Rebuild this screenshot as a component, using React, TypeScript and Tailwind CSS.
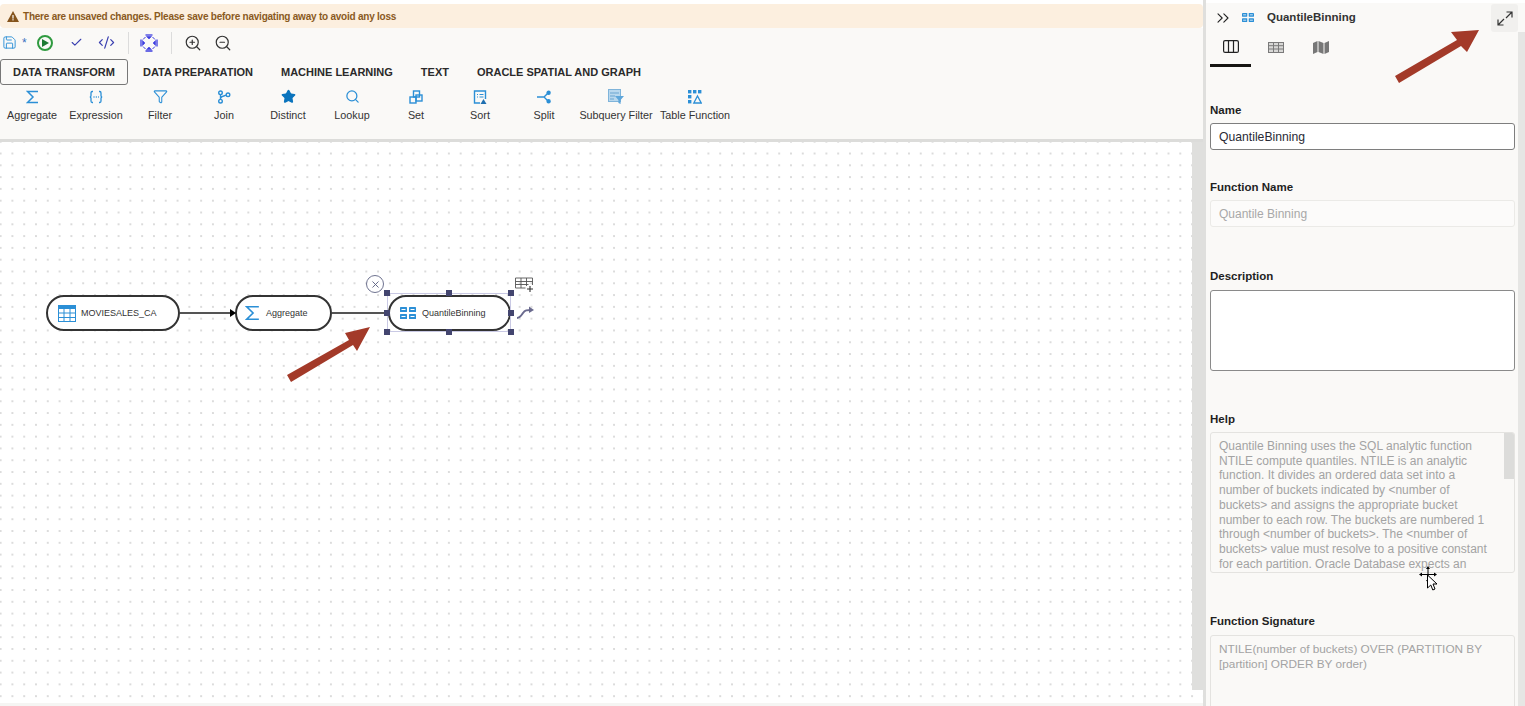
import React from "react";
import { Filter, Star, Search, ZoomIn, ZoomOut, Check, CodeXml, Save, ChevronsRight, X } from "lucide-react";

const blue = "#2b8fd6";

const SigmaIcon = ({ w = 13, h = 14, sw = 1.5 }: { w?: number; h?: number; sw?: number }) => (
  <svg width={w} height={h} viewBox="0 0 13 14" fill="none" stroke={blue} strokeWidth={sw} preserveAspectRatio="none">
    <path d="M12 1.500H1.500L7 7l-5.500 5.500H12" />
  </svg>
);

const Cell4 = ({ s = 14 }: { s?: number }) => (
  <svg width={s} height={s * 0.75} viewBox="0 0 16 12" fill={blue}>
    <rect x="0" y="0" width="7" height="5" rx="0.6" />
    <rect x="9" y="0" width="7" height="5" rx="0.6" />
    <rect x="0" y="7" width="7" height="5" rx="0.6" />
    <rect x="9" y="7" width="7" height="5" rx="0.6" />
    <rect x="1.5" y="2" width="4" height="1" fill="#fff" />
    <rect x="10.5" y="2" width="4" height="1" fill="#fff" />
    <rect x="1.5" y="9" width="4" height="1" fill="#fff" />
    <rect x="10.5" y="9" width="4" height="1" fill="#fff" />
  </svg>
);

const ExprIcon = () => (
  <svg width="14" height="14" viewBox="0 0 14 14" fill="none" stroke={blue} strokeWidth="1.3">
    <path d="M4 1.500H3.200C2.300 1.500 2 2 2 3v2.500C2 6.500 1.500 7 .8 7c.7 0 1.200.5 1.200 1.500V11c0 1 .3 1.500 1.200 1.500H4" />
    <path d="M10 1.500h.8c.9 0 1.200.5 1.200 1.500v2.500c0 1 .5 1.500 1.200 1.500-.7 0-1.200.5-1.200 1.500V11c0 1-.3 1.500-1.200 1.500H10" />
    <path d="M4.500 7h1M6.800 7h1M9 7h.8" />
  </svg>
);
const JoinIcon = () => (
  <svg width="14" height="14" viewBox="0 0 14 14" fill="none" stroke={blue} strokeWidth="1.4">
    <circle cx="3.5" cy="2.8" r="1.8" />
    <circle cx="3.5" cy="11.2" r="1.8" />
    <circle cx="11" cy="4.8" r="1.8" />
    <path d="M3.500 4.600v4.800M9.200 5.200C7.500 6 5 6 3.500 8" />
  </svg>
);
const SetIcon = () => (
  <svg width="14" height="14" viewBox="0 0 14 14" fill="none" stroke={blue} strokeWidth="1.4">
    <rect x="4.5" y="1" width="6" height="6" />
    <rect x="1" y="7" width="6" height="6" />
    <rect x="7" y="5" width="6" height="6" />
  </svg>
);
const SortIcon = () => (
  <svg width="14" height="14" viewBox="0 0 14 14" fill="none">
    <path d="M7 13H1.500V1h11v8" stroke={blue} strokeWidth="1.4" />
    <path d="M4 4.500h1M6.500 4.500h4M4 7h1M6.500 7h4" stroke={blue} strokeWidth="1" />
    <path d="M10.500 9l3 5h-6z" fill="#1f6fb0" />
  </svg>
);
const SplitIcon = () => (
  <svg width="14" height="14" viewBox="0 0 14 14" fill="none" stroke={blue} strokeWidth="1.4">
    <path d="M0 7h7l3.500-3.500M7 7l3.500 3.500" />
    <circle cx="11.6" cy="2.8" r="1.5" fill={blue} />
    <circle cx="11.6" cy="11.2" r="1.5" fill={blue} />
  </svg>
);
const SubqueryIcon = () => (
  <svg width="16" height="15" viewBox="0 0 16 15" fill="none">
    <rect x="0.5" y="0.5" width="12" height="12" fill="#b9d8ee" stroke="#7fb4da" />
    <path d="M2 4h9M2 7h5M2 10h4" stroke="#6aa5d0" />
    <path d="M7 7h9l-3.400 4v4l-2.200-1v-3z" fill="#5ea6da" />
  </svg>
);
const TableFnIcon = () => (
  <svg width="14" height="14" viewBox="0 0 14 14" fill={blue}>
    <rect x="0" y="0" width="3.4" height="3.4" />
    <rect x="5" y="0" width="3.4" height="3.4" />
    <rect x="10" y="0" width="3.4" height="3.4" />
    <rect x="0" y="5" width="3.4" height="3.4" />
    <rect x="0" y="10" width="3.4" height="3.4" />
    <path d="M9.500 6l3.700 7H5.800z" fill="none" stroke={blue} strokeWidth="1.3" />
  </svg>
);

const palette = [
  { label: "Aggregate", w: "w-[64px]", icon: <SigmaIcon /> },
  { label: "Expression", w: "w-[64px]", icon: <ExprIcon /> },
  { label: "Filter", w: "w-[64px]", icon: <Filter size={15} color={blue} strokeWidth={1.7} /> },
  { label: "Join", w: "w-[64px]", icon: <JoinIcon /> },
  { label: "Distinct", w: "w-[64px]", icon: <Star size={15} color="#0b74bd" fill="#0b74bd" /> },
  { label: "Lookup", w: "w-[64px]", icon: <Search size={15} color={blue} strokeWidth={2} /> },
  { label: "Set", w: "w-[64px]", icon: <SetIcon /> },
  { label: "Sort", w: "w-[64px]", icon: <SortIcon /> },
  { label: "Split", w: "w-[64px]", icon: <SplitIcon /> },
  { label: "Subquery Filter", w: "w-[80px]", icon: <SubqueryIcon /> },
  { label: "Table Function", w: "w-[78px]", icon: <TableFnIcon /> },
];

const Handle = ({ className }: { className: string }) => (
  <div className={`absolute w-[6px] h-[6px] bg-[#43456f] ${className}`} />
);

const Node = ({ className, icon, label }: { className: string; icon: React.ReactNode; label: string }) => (
  <div className={`absolute h-[36px] rounded-[18px] border-2 border-[#333333] bg-white flex items-center text-[9px] text-[#333] ${className}`}>
    {icon}
    <span className="mt-[1px]">{label}</span>
  </div>
);

const Label = ({ children, className = "" }: { children: React.ReactNode; className?: string }) => (
  <div className={`text-[11.5px] leading-[14px] font-bold text-[#1f1f1f] ${className}`}>{children}</div>
);

export default function App() {
  return (
    <div className="w-[1525px] h-[706px] overflow-hidden flex bg-white font-['Liberation_Sans',sans-serif]">
      <div className="w-[1203px] h-full flex flex-col pt-[4px]">
        <div className="h-[24px] shrink-0 bg-[#fcefdf] rounded-[4px] flex items-center pl-[7px] gap-[4px] text-[10px] tracking-[-0.23px] font-bold text-[#8a5a1e]">
          <svg width="12" height="11" viewBox="0 0 12 11"><path d="M6 0l6 11H0z" fill="#85541c" /><rect x="5.4" y="4" width="1.2" height="3.6" fill="#fff" /><rect x="5.4" y="8.2" width="1.2" height="1.2" fill="#fff" /></svg>
          <span>There are unsaved changes. Please save before navigating away to avoid any loss</span>
        </div>
        <div className="h-[111px] shrink-0 bg-[#faf9f7] flex flex-col">
          <div className="h-[31px] shrink-0 flex items-center pl-[2px] pb-[2px]">
            <Save size={15} color={blue} strokeWidth={1.5} />
            <span className="ml-[5px] w-[7px] text-[12px] text-[#3a70c0] leading-none">*</span>
            <div className="ml-[8px] w-[16px] h-[16px] rounded-full border-2 border-[#2f9a3f] flex items-center justify-center">
              <div className="w-0 h-0 border-y-[4px] border-y-transparent border-l-[7px] border-l-[#1d7a33] ml-[1px]" />
            </div>
            <Check size={13} color="#3a3fb0" strokeWidth={2} className="ml-[17px]" />
            <CodeXml size={17} color="#3a3fb0" strokeWidth={1.7} className="ml-[15px]" />
            <div className="ml-[13px] w-px h-[22px] bg-[#dcdcdc]" />
            <svg className="ml-[11px]" width="18" height="18" viewBox="0 0 18 18" fill="#3d3de0" stroke="#3d3de0" strokeWidth="0.6">
              <path d="M5.500 1h7" fill="none" strokeWidth="1.3" />
              <path d="M6.500 2.500h5L9 5zM6.500 15.500h5L9 13zM2.500 6.500v5L5 9zM15.500 6.500v5L13 9z" />
              <path d="M5.500 17h7M1 5.500v7M17 5.500v7" fill="none" strokeWidth="1.3" />
              <path d="M3 5.500L5.500 3M12.500 3L15 5.500M3 12.500L5.500 15M15 12.500L12.500 15" fill="none" strokeWidth="1" />
            </svg>
            <div className="ml-[13px] w-px h-[22px] bg-[#dcdcdc]" />
            <ZoomIn size={18} color="#333" strokeWidth={1.6} className="ml-[12px]" />
            <ZoomOut size={18} color="#333" strokeWidth={1.6} className="ml-[12px]" />
          </div>
          <div className="h-[26px] shrink-0 flex items-center text-[11px] font-bold text-[#2a2a2a]">
            <div className="h-[26px] w-[128px] flex items-center justify-center border border-[#777] rounded-[3px]">DATA TRANSFORM</div>
            <div className="px-[14px] ml-px">DATA PREPARATION</div>
            <div className="px-[14px]">MACHINE LEARNING</div>
            <div className="px-[14px]">TEXT</div>
            <div className="px-[14px]">ORACLE SPATIAL AND GRAPH</div>
          </div>
          <div className="flex mt-[3px]">
            {palette.map((p) => (
              <div key={p.label} className={`${p.w} flex flex-col items-center text-[10.8px] text-[#333]`}>
                <div className="h-[17px] flex items-center justify-center">{p.icon}</div>
                <div className="mt-[3px] leading-[14px] whitespace-nowrap">{p.label}</div>
              </div>
            ))}
          </div>
        </div>
        <div className="h-[3px] shrink-0 bg-[#dcdcda]" />
        <div className="h-[561px] shrink-0 relative bg-white bg-[radial-gradient(circle,#c2c2c2_0.55px,transparent_0.9px)] bg-[size:11.81px_11.81px] bg-[position:-5.3px_-6.2px]">
          <div className="absolute right-0 top-0 w-[11px] h-[548px] bg-[#dfdfdd]" />
          <Node className="left-[46px] top-[153px] w-[134px]" icon={
            <svg className="ml-[10px] mr-[5px]" width="18" height="17" viewBox="0 0 18 17" fill="none" stroke={blue}>
              <rect x="0.5" y="0.5" width="17" height="16" fill="#fff" />
              <rect x="0" y="0" width="18" height="4" fill={blue} stroke="none" />
              <path d="M6 0v17M12 0v17M0 8h18M0 12.500h18" />
            </svg>
          } label="MOVIESALES_CA" />
          <Node className="left-[235px] top-[153px] w-[97px]" icon={<span className="ml-[8px] mr-[6px] flex"><SigmaIcon w={15} h={16} sw={1.4} /></span>} label="Aggregate" />
          <div className="absolute left-[180px] top-[170px] w-[53px] h-[2px] bg-[#555]" />
          <div className="absolute left-[230px] top-[167px] w-0 h-0 border-y-[4px] border-y-transparent border-l-[6px] border-l-black" />
          <div className="absolute left-[332px] top-[170px] w-[56px] h-[2px] bg-[#555]" />
          <Node className="left-[388px] top-[153px] w-[123px]" icon={<span className="ml-[10px] mr-[6px] flex"><Cell4 s={16} /></span>} label="QuantileBinning" />
          <div className="absolute left-[387px] top-[151px] w-[124px] h-[39px] border border-[#c9c9e4]" />
          <Handle className="left-[384px] top-[148px]" />
          <Handle className="left-[446px] top-[148px]" />
          <Handle className="left-[508px] top-[148px]" />
          <Handle className="left-[384px] top-[168px]" />
          <Handle className="left-[508px] top-[168px]" />
          <Handle className="left-[384px] top-[187px]" />
          <Handle className="left-[446px] top-[187px]" />
          <Handle className="left-[508px] top-[187px]" />
          <div className="absolute left-[366px] top-[133px] w-[18px] h-[18px] rounded-full border-[1.5px] border-[#6f7390] bg-white flex items-center justify-center">
            <X size={11} color="#5a5f80" strokeWidth={2} />
          </div>
          <svg className="absolute left-[515px] top-[135px]" width="19" height="16" viewBox="0 0 19 16" fill="none" stroke="#555" strokeWidth="0.9">
            <path d="M0.500 1h17v7M0.500 1v10h10M0.500 4.500h17M0.500 7.500h13M6 1v10M11.500 1v8" />
            <path d="M15 9v6M12 12h6" stroke="#333" strokeWidth="1.1" />
          </svg>
          <svg className="absolute left-[516px] top-[164px]" width="18" height="14" viewBox="0 0 18 14" fill="none">
            <path d="M1 12C4 12 5 10 7 7c2-3 4-3 8-3" stroke="#6a6a8e" strokeWidth="2" />
            <path d="M13 0.500l5 3.500-5 3z" fill="#6a6a8e" />
          </svg>
          <svg className="absolute left-[285px] top-[183px]" width="88" height="58" viewBox="0 0 88 58">
            <path d="M2 50L64 15L60 8L85 2L72 26L68 20L6 57Z" fill="#a33a29" />
          </svg>
        </div>
        <div className="flex-1 bg-[#f5f5f3]" />
      </div>
      <div className="w-[3px] h-full bg-[#dfdfdd] shrink-0" />
      <div className="flex-1 h-full relative bg-[#faf9f7] border-t-[3px] border-white">
        <div className="absolute right-0 top-[29px] bottom-0 w-[7px] bg-[#e6e6e4]" />
        <div className="h-[29px] flex items-center pl-[7px] relative">
          <ChevronsRight size={20} color="#222" strokeWidth={1.3} />
          <span className="ml-[9px] flex"><Cell4 s={12} /></span>
          <span className="ml-[13px] text-[11.5px] font-bold text-[#333]">QuantileBinning</span>
          <div className="absolute left-[285px] top-[1px] w-[27px] h-[28px] rounded-[3px] bg-[#f1f0ee] flex items-center justify-center">
            <svg width="16" height="15" viewBox="0 0 16 15" fill="none" stroke="#333" strokeWidth="1.2">
              <path d="M9.500 1h5.500v5.500M15 1L9 7M1 8.500V14h5.500M1 14l6-6" />
            </svg>
          </div>
        </div>
        <div className="ml-[4px] w-[140px] h-[35px] flex items-start">
          <div className="w-[41px] h-[35px] pb-[3px] border-b-[3px] border-[#161513] flex items-center justify-center">
            <svg width="16" height="13" viewBox="0 0 16 13" fill="none" stroke="#222" strokeWidth="1.2">
              <rect x="0.6" y="0.6" width="14.8" height="11.8" rx="1.5" />
              <path d="M5.500 .6v11.800M10.500 .6v11.800" />
            </svg>
          </div>
          <div className="ml-[4px] w-[41px] h-[30px] flex items-center justify-center">
            <svg width="16" height="11" viewBox="0 0 16 11" fill="none" stroke="#7a7a7a" strokeWidth="1">
              <rect x="0.5" y="0.5" width="15" height="10" fill="#d8d8d6" />
              <path d="M0.500 3.700h15M0.500 7h15M5.500 .5v10M10.500 .5v10" />
            </svg>
          </div>
          <div className="ml-[4px] w-[41px] h-[30px] flex items-center justify-center">
            <svg width="16" height="13" viewBox="0 0 16 13" fill="#777">
              <path d="M0 2l4.500-2v11L0 13zM5.500 0L10.500 2v11L5.500 11zM11.500 2L16 0v11l-4.500 2z" />
            </svg>
          </div>
        </div>
        <div className="pl-[4px] w-[309px]">
          <Label className="mt-[36px]">Name</Label>
          <div className="mt-[6px] h-[27px] border border-[#7e7e7e] rounded-[3px] bg-white px-[8px] pt-[1px] flex items-center text-[12.2px] text-[#2a2a35]">QuantileBinning</div>
          <Label className="mt-[30px]">Function Name</Label>
          <div className="mt-[6px] h-[27px] border border-[#ebeae7] rounded-[3px] bg-[#fcfbfa] px-[8px] flex items-center text-[12px] text-[#a8a8a8]">Quantile Binning</div>
          <Label className="mt-[42px]">Description</Label>
          <div className="mt-[7px] h-[81px] border border-[#8a8a8a] rounded-[3px] bg-white" />
          <Label className="mt-[41px]">Help</Label>
          <div className="mt-[6px] h-[141px] border border-[#e4e3e0] rounded-[3px] relative overflow-hidden pl-[8px] pr-[20px] pt-[6px] text-[12px] leading-[14.7px] text-[#a3a3a3]">
            Quantile Binning uses the SQL analytic function NTILE compute quantiles. NTILE is an analytic function. It divides an ordered data set into a number of buckets indicated by &lt;number of buckets&gt; and assigns the appropriate bucket number to each row. The buckets are numbered 1 through &lt;number of buckets&gt;. The &lt;number of buckets&gt; value must resolve to a positive constant for each partition. Oracle Database expects an
            <div className="absolute right-0 top-0 w-[10px] h-[46px] bg-[#dcdcda]" />
          </div>
          <Label className="mt-[41px]">Function Signature</Label>
          <div className="mt-[7px] h-[90px] border border-[#e4e3e0] rounded-[3px] pl-[8px] pr-[12px] pt-[6px] text-[11.8px] leading-[14.7px] text-[#a3a3a3]">
            NTILE(number of buckets) OVER (PARTITION BY [partition] ORDER BY order)
          </div>
        </div>
        <svg className="absolute left-[189px] top-[25px]" width="90" height="58" viewBox="0 0 90 58">
          <path d="M0 48L62 12L56 4L84 2L72 24L66 18L4 55Z" fill="#a33a29" />
        </svg>
        <svg className="absolute left-[213px] top-[563px]" width="24" height="30" viewBox="0 0 24 30" fill="#000">
          <path d="M9 0l2 3h-4zM9 17l-2-3h4zM0 8.500l3-2v4zM18 8.500l-3-2v4zM8.500 3h1v11h-1zM3 8h12v1H3z" />
          <path d="M8.500 9l9.500 9h-4l2 5-2.200 1-2-5-3.300 3z" fill="#fff" stroke="#000" strokeWidth="1" />
        </svg>
      </div>
    </div>
  );
}
